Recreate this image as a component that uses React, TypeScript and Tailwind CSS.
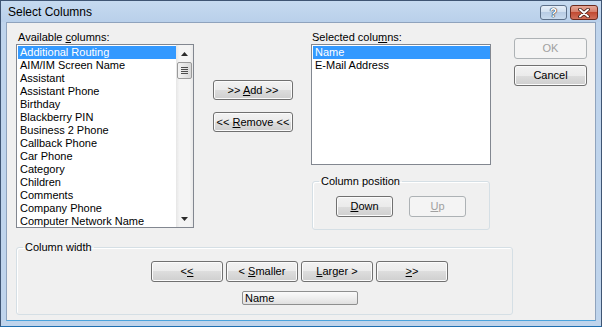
import type { ReactNode } from "react";

const AVAILABLE = [
  "Additional Routing",
  "AIM/IM Screen Name",
  "Assistant",
  "Assistant Phone",
  "Birthday",
  "Blackberry PIN",
  "Business 2 Phone",
  "Callback Phone",
  "Car Phone",
  "Category",
  "Children",
  "Comments",
  "Company Phone",
  "Computer Network Name",
];

const SELECTED = ["Name", "E-Mail Address"];

function U({ children }: { children: ReactNode }) {
  return <span className="underline decoration-1 underline-offset-[1px]">{children}</span>;
}

function Btn({
  children,
  className = "",
  disabled = false,
}: {
  children: ReactNode;
  className?: string;
  disabled?: boolean;
}) {
  return (
    <button
      type="button"
      className={`flex items-center justify-center rounded-[3px] border text-[11px] leading-[13px] ${
        disabled
          ? "border-[#adb2b5] bg-[#f4f4f4] text-[#a0a0a0]"
          : "border-[#707070] bg-[linear-gradient(#f2f2f2,#ebebeb_50%,#dddddd_50%,#cfcfcf)] text-black shadow-[inset_0_0_0_1px_#fbfbfb]"
      } ${className}`}
    >
      <span className="whitespace-pre">{children}</span>
    </button>
  );
}

function ScrollBar() {
  return (
    <div className="flex w-[17px] flex-col bg-[linear-gradient(90deg,#e6e6e6,#f4f4f4_20%,#f4f4f4_80%,#e9e9e9)]">
      <div className="flex h-[17px] items-center justify-center">
        <svg width="7" height="4" viewBox="0 0 7 4">
          <path d="M0 4 L3.5 0 L7 4Z" fill="#2b2b2b" />
        </svg>
      </div>
      <div className="mx-[1px] flex h-[17px] items-center justify-center rounded-[2px] border border-[#9a9a9a] bg-[linear-gradient(90deg,#f3f3f3,#e6e6e6_50%,#d8d8d8)]">
        <svg width="7" height="8" viewBox="0 0 7 8">
          <path d="M0 0.5H7M0 2.5H7M0 4.5H7M0 6.5H7" stroke="#4d4d4d" strokeWidth="1" />
        </svg>
      </div>
      <div className="flex-1" />
      <div className="flex h-[17px] items-center justify-center">
        <svg width="7" height="4" viewBox="0 0 7 4">
          <path d="M0 0 L7 0 L3.5 4Z" fill="#2b2b2b" />
        </svg>
      </div>
    </div>
  );
}

function ListBox({
  items,
  scroll = false,
  className = "",
}: {
  items: string[];
  scroll?: boolean;
  className?: string;
}) {
  return (
    <div className={`flex border border-[#828790] bg-white ${className}`}>
      <div className="flex-1 overflow-hidden pl-[1px] pt-[1px]">
        {items.map((t, i) => (
          <div
            key={t}
            className={`h-[13px] whitespace-nowrap pl-[2px] leading-[13px] ${
              i === 0 ? "bg-[#3399ff] text-white" : "text-black"
            }`}
          >
            {t}
          </div>
        ))}
      </div>
      {scroll && <ScrollBar />}
    </div>
  );
}

export default function App() {
  return (
    <div className="flex h-[327px] w-[602px] flex-col border border-[#3f5573] border-b-[#1f6fb0] bg-[#bfd4ec] font-['Liberation_Sans',Arial,sans-serif] text-[11px] text-black">
      <div className="flex h-[21px] items-start justify-between bg-[linear-gradient(#c6daf0,#b9d0ea)] pl-[7px] pr-[3px]">
        <span className="mt-[4px] text-[12px] leading-[15px]">Select Columns</span>
        <div className="mt-[4px] flex gap-[3px]">
          <div className="flex h-[15px] w-[27px] items-center justify-center rounded-[3px] border border-[#5d7089] bg-[linear-gradient(#e8f0f9,#cfdeef_50%,#b8cce4_50%,#c9dbee)] text-[12px] font-bold leading-none text-white [text-shadow:0_0_1px_#1d2b3c,0_0_1px_#1d2b3c,0_0_1px_#1d2b3c]">
            ?
          </div>
          <div className="flex h-[15px] w-[28px] items-center justify-center rounded-[3px] border border-[#6b2a1e] bg-[linear-gradient(#e6a898,#d47a66_50%,#c24b33_50%,#d0705b)]">
            <svg width="12" height="10" viewBox="0 0 12 10">
              <path d="M2 1.5 L10 8.5 M10 1.5 L2 8.5" stroke="#3a1a14" strokeWidth="3.6" strokeLinecap="round" />
              <path d="M2 1.5 L10 8.5 M10 1.5 L2 8.5" stroke="#ffffff" strokeWidth="2" strokeLinecap="round" />
            </svg>
          </div>
        </div>
      </div>

      <div className="mx-[5px] mb-[5px] flex flex-1 flex-col border border-[#8fa3bd] border-b-[#4aa3dc] bg-[#f0f0f0] pl-[9px] pt-[8px]">
        <div className="flex items-start">
          <div className="w-[178px]">
            <div className="h-[13px] pl-[2px] leading-[13px]">
              Available <U>c</U>olumns:
            </div>
            <ListBox items={AVAILABLE} scroll className="h-[184px]" />
          </div>

          <div className="ml-[19px] flex w-[80px] flex-col pt-[49px]">
            <Btn className="h-[20px]">
              &gt;&gt; <U>A</U>dd &gt;&gt;
            </Btn>
            <Btn className="mt-[12px] h-[20px]">
              &lt;&lt; <U>R</U>emove &lt;&lt;
            </Btn>
          </div>

          <div className="ml-[18px] w-[180px]">
            <div className="h-[13px] pl-[1px] leading-[13px]">
              Selected colu<U>m</U>ns:
            </div>
            <ListBox items={SELECTED} className="h-[121px]" />
            <fieldset className="mx-[1px] mt-[10px] h-[55px] rounded-[3px] border border-[#d5dfe5] shadow-[inset_1px_1px_0_#ffffff]">
              <legend className="ml-[6px] px-[2px] leading-[13px]">Column position</legend>
              <div className="mt-[8px] flex gap-[16px] pl-[23px]">
                <Btn className="h-[21px] w-[57px]">
                  <U>D</U>own
                </Btn>
                <Btn disabled className="h-[21px] w-[57px]">
                  <U>U</U>p
                </Btn>
              </div>
            </fieldset>
          </div>

          <div className="ml-[23px] flex w-[73px] flex-col pt-[7px]">
            <Btn disabled className="h-[21px]">
              OK
            </Btn>
            <Btn className="mt-[6px] h-[21px]">Cancel</Btn>
          </div>
        </div>

        <fieldset className="mt-[11px] h-[74px] w-[497px] rounded-[3px] border border-[#d5dfe5] shadow-[inset_1px_1px_0_#ffffff]">
          <legend className="ml-[6px] px-[2px] leading-[13px]">Column width</legend>
          <div className="mt-[7px] flex gap-[3px] pl-[134px]">
            <Btn className="h-[21px] w-[72px]">
              &lt;<U>&lt;</U>
            </Btn>
            <Btn className="h-[21px] w-[72px]">
              &lt; <U>S</U>maller
            </Btn>
            <Btn className="h-[21px] w-[72px]">
              <U>L</U>arger &gt;
            </Btn>
            <Btn className="h-[21px] w-[72px]">
              <U>&gt;</U>&gt;
            </Btn>
          </div>
          <div className="ml-[225px] mt-[9px] flex h-[14px] w-[116px] items-center rounded-[2px] border border-[#8e8f8f] bg-[linear-gradient(#fafafa,#eeeeee_50%,#e0e0e0)] pl-[2px] leading-[12px]">
            Name
          </div>
        </fieldset>
      </div>
    </div>
  );
}
